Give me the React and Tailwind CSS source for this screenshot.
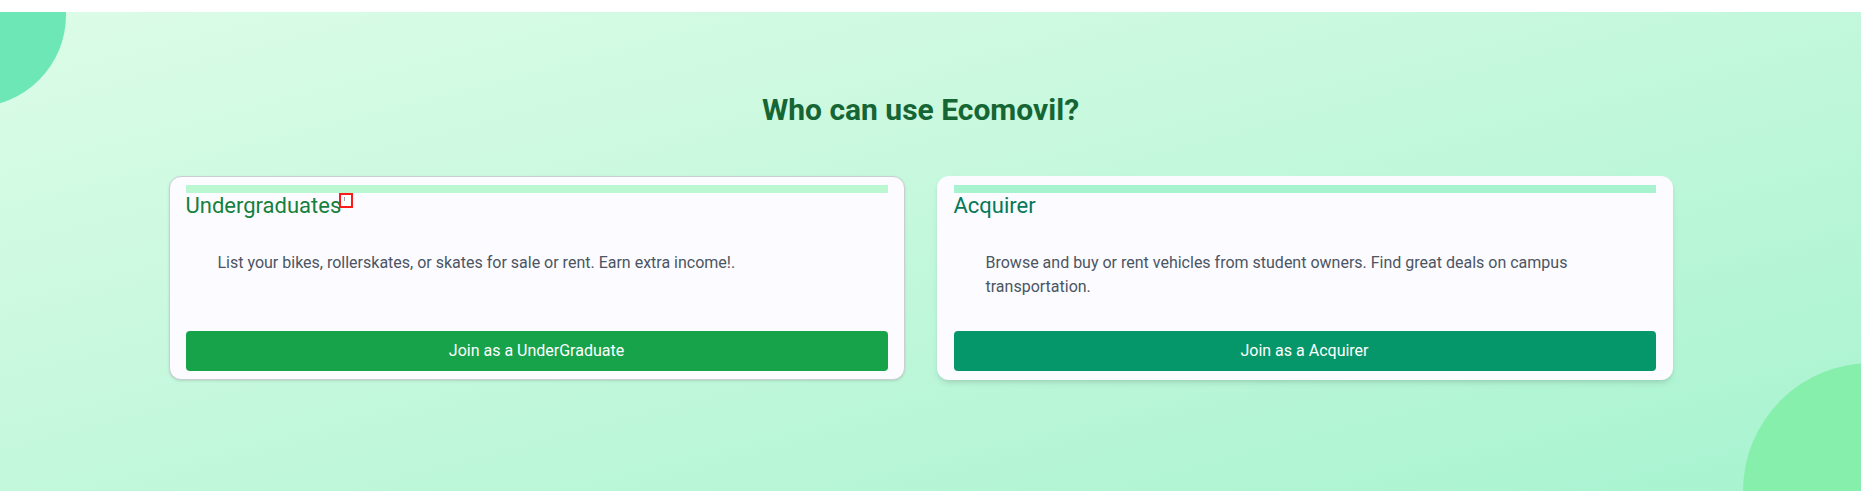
import React from 'react';

const roles = [
    {
        title: 'Undergraduates',
        text: 'List your bikes, rollerskates, or skates for sale or rent. Earn extra income!.',
        cta: 'Join as a UnderGraduate',
        bar: 'bg-[#bbf7d0]',
        titleColor: 'text-[#15803d]',
        button: 'bg-[#16a34a]',
        card: 'border-[#c9ced2] shadow-sm',
        marker: true,
    },
    {
        title: 'Acquirer',
        text: 'Browse and buy or rent vehicles from student owners. Find great deals on campus transportation.',
        cta: 'Join as a Acquirer',
        bar: 'bg-[#a7f3d0]',
        titleColor: 'text-[#047857]',
        button: 'bg-[#059669]',
        card: 'border-transparent shadow-md',
        marker: false,
    },
];

const RoleCard = ({ role }) => (
    <div className={`flex flex-col bg-[#fcfbff] rounded-xl border pt-2 px-4 pb-2 ${role.card}`}>
        <div className={`h-2 ${role.bar}`}></div>
        <div className="flex items-start">
            <h3 className={`text-[22px] leading-[26px] font-normal ${role.titleColor}`}>{role.title}</h3>
            {role.marker && (
                <span className="relative ml-[-2px] w-[14px] h-[15px] border-2 border-[#ff1a1a] bg-white">
                    <span className="absolute left-[3px] top-[2px] w-px h-[4px] bg-gray-400"></span>
                </span>
            )}
        </div>
        <p className="p-8 text-base leading-6 text-[#4b5563]">{role.text}</p>
        <button className={`mt-auto h-10 rounded text-white text-base font-normal ${role.button}`}>
            {role.cta}
        </button>
    </div>
);

export default function App() {
    return (
        <div className="bg-white min-h-[502px] font-['Roboto','Liberation_Sans',sans-serif]">
            <section className="relative mt-3 overflow-hidden bg-linear-to-br from-[#dcfce7] to-[#a7f3d0] pt-20 pb-[111px]">
                {/* decorative blobs */}
                <div className="absolute -left-[118px] -top-[89px] w-[184px] h-[184px] rounded-full bg-[#6ee7b7]"></div>
                <div className="absolute -right-[138px] -bottom-[128px] w-64 h-64 rounded-full bg-[#86efac]"></div>

                <div className="relative pr-[20px]">
                    <h2 className="text-3xl font-bold text-[#166534] text-center">Who can use Ecomovil?</h2>
                    <div className="mx-auto mt-12 w-[1504px] grid grid-cols-2 gap-8">
                        {roles.map((role) => (
                            <RoleCard key={role.title} role={role} />
                        ))}
                    </div>
                </div>
            </section>
        </div>
    );
}
